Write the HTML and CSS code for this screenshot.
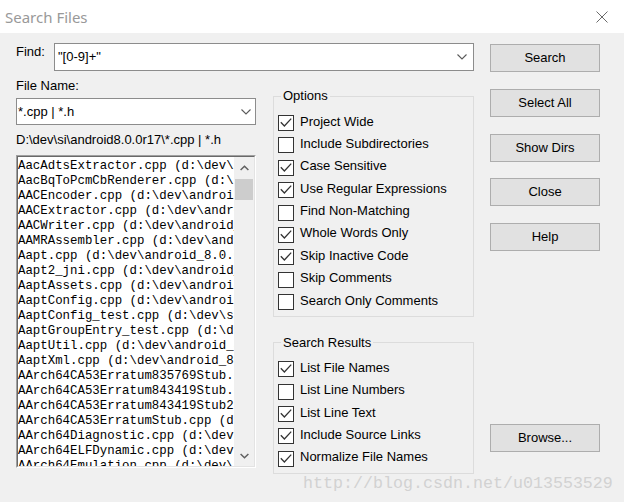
FILE: index.html
```html
<!DOCTYPE html>
<html>
<head>
<meta charset="utf-8">
<title>Search Files</title>
<link rel="stylesheet" href="styles.css">
</head>
<body>
<div class="window">
  <div class="titlebar">
    <span class="title">Search Files</span>
    <svg class="close" width="12" height="12" viewBox="0 0 12 12"><path d="M0.5 0.5 L11.5 11.5 M11.5 0.5 L0.5 11.5" stroke="#6a6a6a" stroke-width="1" fill="none"/></svg>
  </div>
  <div class="content">
    <div class="main">
      <div class="find-row">
        <span class="find-label">Find:</span>
        <div class="combo combo-find">
          <span class="combo-text">"[0-9]+"</span>
          <svg class="chev" width="10" height="6" viewBox="0 0 10 6"><path d="M0.5 0.5 L5 5 L9.5 0.5" stroke="#5a5a5a" stroke-width="1.1" fill="none"/></svg>
        </div>
      </div>
      <div class="lower">
        <div class="left-col">
          <div class="file-label">File Name:</div>
          <div class="combo combo-file">
            <span class="combo-text">*.cpp | *.h</span>
            <svg class="chev" width="10" height="6" viewBox="0 0 10 6"><path d="M0.5 0.5 L5 5 L9.5 0.5" stroke="#5a5a5a" stroke-width="1.1" fill="none"/></svg>
          </div>
          <div class="path">D:\dev\si\android8.0.0r17\*.cpp | *.h</div>
          <div class="listbox">
            <div class="listbox-inner">
              <div class="list-items">
                <div class="item">AacAdtsExtractor.cpp (d:\dev\an</div>
                <div class="item">AacBqToPcmCbRenderer.cpp (d:\de</div>
                <div class="item">AACEncoder.cpp (d:\dev\android</div>
                <div class="item">AACExtractor.cpp (d:\dev\androi</div>
                <div class="item">AACWriter.cpp (d:\dev\android_</div>
                <div class="item">AAMRAssembler.cpp (d:\dev\andro</div>
                <div class="item">Aapt.cpp (d:\dev\android_8.0.0_</div>
                <div class="item">Aapt2_jni.cpp (d:\dev\android_8</div>
                <div class="item">AaptAssets.cpp (d:\dev\android_</div>
                <div class="item">AaptConfig.cpp (d:\dev\android_</div>
                <div class="item">AaptConfig_test.cpp (d:\dev\src</div>
                <div class="item">AaptGroupEntry_test.cpp (d:\dev</div>
                <div class="item">AaptUtil.cpp (d:\dev\android_8.</div>
                <div class="item">AaptXml.cpp (d:\dev\android_8.0</div>
                <div class="item">AArch64CA53Erratum835769Stub.cp</div>
                <div class="item">AArch64CA53Erratum843419Stub.cp</div>
                <div class="item">AArch64CA53Erratum843419Stub2.c</div>
                <div class="item">AArch64CA53ErratumStub.cpp (d:\</div>
                <div class="item">AArch64Diagnostic.cpp (d:\dev\a</div>
                <div class="item">AArch64ELFDynamic.cpp (d:\dev\a</div>
                <div class="item">AArch64Emulation.cpp (d:\dev\an</div>
              </div>
              <div class="scrollbar">
                <div class="sb-btn"><svg width="9" height="6" viewBox="0 0 9 6"><path d="M0.6 5 L4.5 1.2 L8.4 5" stroke="#606060" stroke-width="1.5" fill="none"/></svg></div>
                <div class="sb-track"><div class="sb-thumb"></div></div>
                <div class="sb-btn"><svg width="9" height="6" viewBox="0 0 9 6"><path d="M0.6 1 L4.5 4.8 L8.4 1" stroke="#606060" stroke-width="1.5" fill="none"/></svg></div>
              </div>
            </div>
          </div>
        </div>
        <div class="mid-col">
          <fieldset class="group group-options">
            <legend>Options</legend>
            <div class="check-row"><span class="cb"><svg width="14" height="14" viewBox="0 0 14 14"><path d="M1.8 6.2 L5.4 10 L12.2 2.6" stroke="#333" stroke-width="1.3" fill="none"/></svg></span><span class="cb-text">Project Wide</span></div>
            <div class="check-row"><span class="cb"></span><span class="cb-text">Include Subdirectories</span></div>
            <div class="check-row"><span class="cb"><svg width="14" height="14" viewBox="0 0 14 14"><path d="M1.8 6.2 L5.4 10 L12.2 2.6" stroke="#333" stroke-width="1.3" fill="none"/></svg></span><span class="cb-text">Case Sensitive</span></div>
            <div class="check-row"><span class="cb"><svg width="14" height="14" viewBox="0 0 14 14"><path d="M1.8 6.2 L5.4 10 L12.2 2.6" stroke="#333" stroke-width="1.3" fill="none"/></svg></span><span class="cb-text">Use Regular Expressions</span></div>
            <div class="check-row"><span class="cb"></span><span class="cb-text">Find Non-Matching</span></div>
            <div class="check-row"><span class="cb"><svg width="14" height="14" viewBox="0 0 14 14"><path d="M1.8 6.2 L5.4 10 L12.2 2.6" stroke="#333" stroke-width="1.3" fill="none"/></svg></span><span class="cb-text">Whole Words Only</span></div>
            <div class="check-row"><span class="cb"><svg width="14" height="14" viewBox="0 0 14 14"><path d="M1.8 6.2 L5.4 10 L12.2 2.6" stroke="#333" stroke-width="1.3" fill="none"/></svg></span><span class="cb-text">Skip Inactive Code</span></div>
            <div class="check-row"><span class="cb"></span><span class="cb-text">Skip Comments</span></div>
            <div class="check-row"><span class="cb"></span><span class="cb-text">Search Only Comments</span></div>
          </fieldset>
          <fieldset class="group group-results">
            <legend>Search Results</legend>
            <div class="check-row"><span class="cb"><svg width="14" height="14" viewBox="0 0 14 14"><path d="M1.8 6.2 L5.4 10 L12.2 2.6" stroke="#333" stroke-width="1.3" fill="none"/></svg></span><span class="cb-text">List File Names</span></div>
            <div class="check-row"><span class="cb"></span><span class="cb-text">List Line Numbers</span></div>
            <div class="check-row"><span class="cb"><svg width="14" height="14" viewBox="0 0 14 14"><path d="M1.8 6.2 L5.4 10 L12.2 2.6" stroke="#333" stroke-width="1.3" fill="none"/></svg></span><span class="cb-text">List Line Text</span></div>
            <div class="check-row"><span class="cb"><svg width="14" height="14" viewBox="0 0 14 14"><path d="M1.8 6.2 L5.4 10 L12.2 2.6" stroke="#333" stroke-width="1.3" fill="none"/></svg></span><span class="cb-text">Include Source Links</span></div>
            <div class="check-row"><span class="cb"><svg width="14" height="14" viewBox="0 0 14 14"><path d="M1.8 6.2 L5.4 10 L12.2 2.6" stroke="#333" stroke-width="1.3" fill="none"/></svg></span><span class="cb-text">Normalize File Names</span></div>
          </fieldset>
        </div>
      </div>
    </div>
    <div class="buttons">
      <div class="btn">Search</div>
      <div class="btn">Select All</div>
      <div class="btn">Show Dirs</div>
      <div class="btn">Close</div>
      <div class="btn">Help</div>
      <div class="btn btn-browse">Browse...</div>
    </div>
  </div>
  <div class="watermark">http://blog.csdn.net/u013553529</div>
</div>
</body>
</html>
```

FILE: styles.css
```css
* { box-sizing: border-box; }
html, body { margin: 0; padding: 0; }
body {
  width: 624px;
  height: 502px;
  overflow: hidden;
  background: #f0f0f0;
  font-family: "Liberation Sans", Arial, sans-serif;
  font-size: 13px;
  color: #000;
}
.window {
  position: relative;
  width: 624px;
  height: 502px;
  background: #f0f0f0;
  overflow: hidden;
}
.titlebar {
  height: 33px;
  background: #fff;
  display: flex;
  align-items: center;
  justify-content: space-between;
  padding: 0 16px 0 5px;
}
.title {
  font-family: "Noto Sans", "Open Sans", sans-serif;
  font-size: 15px;
  line-height: 20px;
  color: #999;
}
.close { display: block; }
.content {
  display: flex;
  padding: 10px 0 0 16px;
}
.main {
  width: 458px;
  display: flex;
  flex-direction: column;
}
.find-row {
  display: flex;
  height: 28px;
}
.find-label {
  width: 38px;
  line-height: 16px;
  margin-top: 1px;
}
.combo {
  display: flex;
  align-items: center;
  background: #fff;
  border: 1px solid #8c8c8c;
}
.combo-find {
  flex: 1;
  height: 28px;
  padding-left: 3px;
}
.combo-find .chev { margin-left: auto; margin-right: 6px; }
.combo-text { line-height: 16px; white-space: pre; }
.lower {
  display: flex;
  gap: 17px;
}
.left-col {
  width: 240px;
  display: flex;
  flex-direction: column;
}
.file-label {
  margin-top: 7px;
  line-height: 16px;
}
.combo-file {
  margin-top: 4px;
  height: 27px;
  padding-left: 1px;
}
.combo-file .chev { margin-left: auto; margin-right: 4px; margin-top: 1px; }
.path {
  margin-top: 7px;
  line-height: 16px;
  white-space: pre;
}
.listbox {
  margin-top: 7px;
  height: 313px;
  border: 1px solid;
  border-color: #a0a0a0 #ffffff #ffffff #a0a0a0;
}
.listbox-inner {
  height: 100%;
  display: flex;
  border: 1px solid;
  border-color: #696969 #e3e3e3 #e3e3e3 #696969;
  background: #fff;
}
.list-items {
  flex: 1;
  min-width: 0;
  overflow: hidden;
  padding-top: 1.5px;
  font-family: "Liberation Mono", "Courier New", monospace;
  font-size: 12.4px;
  line-height: 15px;
}
.item { white-space: pre; }
.scrollbar {
  width: 20px;
  background: #f0f0f0;
  display: flex;
  flex-direction: column;
}
.sb-btn {
  height: 21px;
  display: flex;
  align-items: center;
  justify-content: center;
}
.sb-btn svg { display: block; }
.sb-track { flex: 1; }
.sb-thumb {
  margin: 1px 1px 0 1px;
  height: 21px;
  background: #cdcdcd;
}
.mid-col {
  width: 201px;
  display: flex;
  flex-direction: column;
}
.group {
  margin: 0;
  min-width: 0;
  border: 1px solid #dcdcdc;
  padding: 9.5px 0 1.5px 4px;
}
.group legend {
  padding: 0 2px;
  margin-left: 3px;
  line-height: 16px;
}
.group-options { margin-top: 17px; }
.group-results {
  margin-top: 17.6px;
  padding-top: 9px;
  padding-bottom: 2px;
}
.check-row {
  display: flex;
  align-items: flex-start;
  height: 22.375px;
}
.group-results .check-row { height: 22.3px; }
.cb {
  width: 16px;
  height: 16px;
  margin-top: 1.5px;
  margin-right: 6px;
  border: 1px solid #333;
  background: #fff;
  flex: none;
}
.cb svg { display: block; }
.cb-text {
  line-height: 16px;
  white-space: pre;
}
.buttons {
  margin-left: 16px;
  padding-top: 1px;
  width: 110px;
  display: flex;
  flex-direction: column;
  gap: 16.75px;
}
.btn {
  height: 28px;
  border: 1px solid #adadad;
  background: #e1e1e1;
  display: flex;
  align-items: center;
  justify-content: center;
  line-height: 16px;
}
.btn-browse { margin-top: 156.25px; }
.watermark {
  position: absolute;
  left: 303px;
  top: 474px;
  font-family: "Liberation Mono", "Courier New", monospace;
  font-size: 16.67px;
  line-height: 20px;
  color: #d2d2d2;
  white-space: pre;
}
```
